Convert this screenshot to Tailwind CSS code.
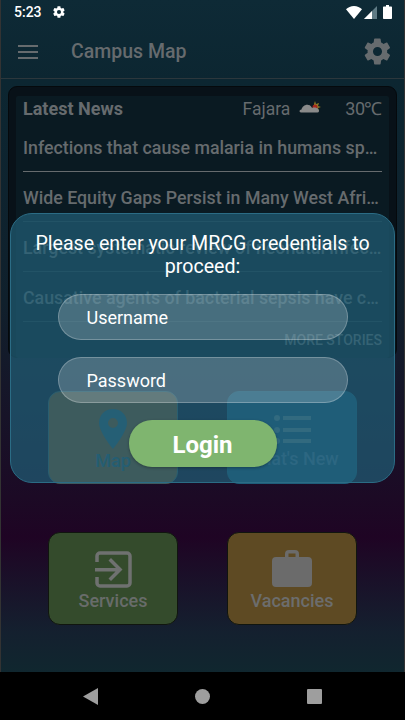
<!DOCTYPE html>
<html lang="en">
<head>
    <meta charset="UTF-8">
    <meta name="viewport" content="width=device-width, initial-scale=1.0">
    <title>Campus Map</title>
    <script src="https://cdn.jsdelivr.net/npm/@tailwindcss/browser@4"></script>
</head>
<body class="bg-black font-['Roboto',sans-serif]">
    <div class="relative w-[405px] h-[720px] overflow-hidden flex flex-col">
        <div class="h-[672px] shrink-0 flex flex-col bg-[linear-gradient(180deg,#0e2a36_0%,#0c2631_12%,#10202c_45%,#1c0a25_74%,#1f0424_80%,#14202f_94%,#10272f_100%)] border-x border-[#333]">
            <!-- status bar -->
            <div class="h-6 flex items-center justify-between pl-[13px] pr-[12px] text-white">
                <div class="flex items-center gap-[10px]">
                    <span class="text-[14px] font-medium leading-none">5:23</span>
                    <svg class="w-[14px] h-[14px]" viewBox="0 0 24 24" fill="#fff"><path d="M19.400 13c0-.3.100-.6.100-1s0-.7-.1-1l2.100-1.600c.2-.2.2-.4.1-.6l-2-3.500c-.1-.2-.4-.3-.6-.2l-2.500 1c-.5-.4-1.100-.7-1.700-1L14.400 2.400c0-.2-.2-.4-.5-.4h-4c-.2 0-.5.200-.5.400L9 5.100c-.6.300-1.200.600-1.700 1l-2.500-1c-.2-.1-.5 0-.6.200l-2 3.500c-.1.200 0 .4.100.6L4.400 11c0 .3-.1.700-.1 1s0 .7.100 1l-2.100 1.600c-.2.200-.2.400-.1.600l2 3.500c.1.200.4.300.6.200l2.500-1c.5.400 1.100.700 1.700 1l.4 2.700c0 .2.300.4.500.4h4c.3 0 .5-.2.500-.4l.4-2.700c.6-.3 1.200-.6 1.700-1l2.500 1c.2.100.5 0 .6-.2l2-3.500c.1-.2.100-.4-.1-.6L19.400 13zM12 15.500a3.500 3.500 0 1 1 0-7 3.500 3.500 0 0 1 0 7z"/></svg>
                </div>
                <div class="flex items-center gap-[6px]">
                    <svg class="w-[16px] h-[13px]" viewBox="0 0 16 13" fill="#fff"><path d="M0 3.200C2 1.300 4.800 0 8 0s6 1.300 8 3.200L8 13z"/></svg>
                    <svg class="w-[13px] h-[13px] -ml-[4px]" viewBox="0 0 13 13"><path d="M13 0v13H0z" fill="#5f7b85"/><path d="M8 5v8H0z" fill="#fff"/></svg>
                    <svg class="w-[9px] h-[14px]" viewBox="0 0 9 14" fill="#fff"><path d="M3 0h3v1.500h2c.6 0 1 .4 1 1V13c0 .6-.4 1-1 1H1c-.6 0-1-.4-1-1V2.500c0-.6.4-1 1-1h2z"/></svg>
                </div>
            </div>
            <!-- app bar -->
            <div class="h-[55px] flex items-center pl-[17px] pr-[11px] pt-[2px] border-b border-[#2c373c] text-[#666b6e]">
                <svg class="w-[20px] h-[14px]" viewBox="0 0 20 14" fill="#666b6e"><path d="M0 0h20v2H0zM0 6h20v2H0zM0 12h20v2H0z"/></svg>
                <span class="ml-[33px] text-[19.500px] font-medium">Campus Map</span>
                <svg class="ml-auto w-[31px] h-[31px] -mt-[2px]" viewBox="0 0 24 24" fill="#666b6e"><path d="M19.400 13c0-.3.100-.6.100-1s0-.7-.1-1l2.100-1.600c.2-.2.2-.4.1-.6l-2-3.500c-.1-.2-.4-.3-.6-.2l-2.500 1c-.5-.4-1.100-.7-1.700-1L14.400 2.400c0-.2-.2-.4-.5-.4h-4c-.2 0-.5.200-.5.400L9 5.100c-.6.300-1.200.600-1.700 1l-2.500-1c-.2-.1-.5 0-.6.200l-2 3.500c-.1.200 0 .4.100.6L4.400 11c0 .3-.1.700-.1 1s0 .7.100 1l-2.100 1.600c-.2.200-.2.400-.1.600l2 3.500c.1.200.4.300.6.200l2.500-1c.5.400 1.100.700 1.700 1l.4 2.700c0 .2.300.4.500.4h4c.3 0 .5-.2.500-.4l.4-2.700c.6-.3 1.200-.6 1.700-1l2.500 1c.2.100.5 0 .6-.2l2-3.500c.1-.2.100-.4-.1-.6L19.400 13zM12 15.500a3.500 3.500 0 1 1 0-7 3.500 3.500 0 0 1 0 7z"/></svg>
            </div>
            <!-- news card -->
            <div class="mt-[7px] mx-[7px] h-[272px] rounded-[9px] bg-[#081118] border border-[#05090c] px-[7px] pt-[9px]">
                <div class="h-[262px] bg-[#0a1a22] rounded-[2px] px-[7px] text-[#666b6e]">
                    <div class="h-[26px] pb-[2px] flex items-center">
                        <span class="text-[18px] font-bold">Latest News</span>
                        <span class="ml-auto text-[17.500px] h-[22px] leading-[24px] overflow-hidden">Fajara</span>
                        <svg class="ml-[9px] w-[22px] h-[13px] -mt-[1px]" viewBox="0 0 22 13"><path d="M15 3l1-3 1 3 3-1-1 3 3 1-3 1 1 3-5-1z" fill="#8a7a25"/><circle cx="16" cy="6" r="2.500" fill="#a5281c"/><path d="M2 11.500c-2 0-2-3 .5-3 .7-3 4-5.500 7-4.500 2 0 3 2 3.500 3 2-.8 5-.5 6.500 1.500 1 1.500.5 3-1 3z" fill="#8a8a8a"/></svg>
                        <span class="ml-[24px] text-[18px] tracking-[-0.5px]">30℃</span>
                    </div>
                    <div class="h-[50px] pt-[3px] border-b border-[#666b6e] flex items-center">
                        <p class="truncate text-[17.800px] font-medium w-full">Infections that cause malaria in humans spread around the world</p>
                    </div>
                    <div class="h-[50px] pt-[3px] border-b border-[#25383f] flex items-center">
                        <p class="truncate text-[17.800px] font-medium w-full">Wide Equity Gaps Persist in Many West African countries</p>
                    </div>
                    <div class="h-[50px] pt-[3px] border-b border-[#25383f] flex items-center">
                        <p class="truncate text-[17.800px] font-medium w-full">Largest systematic review of neonatal infections published</p>
                    </div>
                    <div class="h-[50px] pt-[3px] border-b border-[#25383f] flex items-center">
                        <p class="truncate text-[17.800px] font-medium w-full">Causative agents of bacterial sepsis have changed over time</p>
                    </div>
                    <div class="h-[36px] flex items-center justify-end">
                        <span class="text-[14px] font-medium">MORE STORIES</span>
                    </div>
                </div>
            </div>
            <!-- tiles -->
            <div class="mt-[33px] ml-[47px] grid grid-cols-[130px_130px] gap-x-[49px] gap-y-[48px]">
                <div class="h-[93px] rounded-[12px] border border-[#3d5a5e] bg-[#7f5021] flex flex-col items-center pt-[17px] text-[#2f5a68]">
                    <svg class="w-[28px] h-[40px]" viewBox="0 0 28 40" fill="#2f5f6f"><path fill-rule="evenodd" d="M14 0C6 0 0 6 0 14c0 9 14 26 14 26s14-17 14-26C28 6 22 0 14 0zm0 19a5 5 0 1 1 0-10 5 5 0 0 1 0 10z"/></svg>
                    <span class="-mt-[2px] text-[18px] font-medium">Map</span>
                </div>
                <div class="h-[93px] rounded-[12px] border border-[#1f5c78] bg-[#1b5778] flex flex-col items-center pt-[23px] text-[#49789a]">
                    <svg class="w-[37px] h-[29px]" viewBox="0 0 37 29" fill="#5a8292"><circle cx="3" cy="3" r="3"/><circle cx="3" cy="15" r="3"/><circle cx="3" cy="26" r="3"/><path d="M9 1h28v4H9zM9 13h28v4H9zM9 24h28v4H9z"/></svg>
                    <span class="mt-[1px] text-[18px] font-medium">What's New</span>
                </div>
                <div class="h-[93px] rounded-[12px] border border-[#10150f] bg-[#344b2c] flex flex-col items-center pt-[18px] text-[#686c6a]">
                    <svg class="w-[37px] h-[37px]" viewBox="0 0 37 37"><path d="M2 11V5a3 3 0 0 1 3-3h27a3 3 0 0 1 3 3v27a3 3 0 0 1-3 3H5a3 3 0 0 1-3-3v-6" fill="none" stroke="#6f7170" stroke-width="3.500"/><path d="M0 17h24v3.500H0zM16 7l11.500 11.500L16 30l-2.500-2.500 9-9-9-9z" fill="#6f7170"/></svg>
                    <span class="-mt-[1px] text-[18px] font-medium">Services</span>
                </div>
                <div class="h-[93px] rounded-[12px] border border-[#10150f] bg-[#5e4a23] flex flex-col items-center pt-[16px] text-[#6c6d6d]">
                    <svg class="w-[40px] h-[38px]" viewBox="0 0 40 38" fill="#6b6b6b"><path fill-rule="evenodd" d="M13 8V5a4 4 0 0 1 4-4h6a4 4 0 0 1 4 4v3h9a4 4 0 0 1 4 4v22a4 4 0 0 1-4 4H4a4 4 0 0 1-4-4V12a4 4 0 0 1 4-4zm3.500 0h7V4.500h-7z"/></svg>
                    <span class="text-[18px] font-medium">Vacancies</span>
                </div>
            </div>
        </div>
        <!-- nav bar -->
        <div class="h-12 bg-black flex items-center justify-center gap-[97px]">
            <svg class="w-[15px] h-[17px]" viewBox="0 0 15 17" fill="#9e9e9e"><path d="M15 0v17L0 8.500z"/></svg>
            <div class="w-[15px] h-[15px] rounded-full bg-[#9e9e9e]"></div>
            <div class="w-[15px] h-[15px] rounded-[1px] bg-[#9e9e9e]"></div>
        </div>
        <!-- login dialog -->
        <div class="absolute left-[10px] top-[213px] w-[385px] h-[270px] rounded-[22px] bg-[#215f78]/70 border border-[#2b6c85] flex flex-col items-center text-white">
            <p class="mt-[18px] w-[350px] text-center text-[19.600px] leading-[23px]">Please enter your MRCG credentials to proceed:</p>
            <div class="mt-[16px] w-[290px] h-[46px] rounded-[23px] bg-white/20 border border-white/25 flex items-center pl-[28px] pt-[1px] text-[18px]">Username</div>
            <div class="mt-[17px] w-[290px] h-[46px] rounded-[23px] bg-white/20 border border-white/25 flex items-center pl-[28px] pt-[1px] text-[18px]">Password</div>
            <div class="mt-[17px] w-[148px] h-[47px] rounded-[23px] bg-[#7fb56f] shadow-[0_1px_3px_rgba(0,0,0,0.3)] flex items-center justify-center pt-[2px] text-[24px] font-bold">Login</div>
        </div>
    </div>
</body>
</html>
